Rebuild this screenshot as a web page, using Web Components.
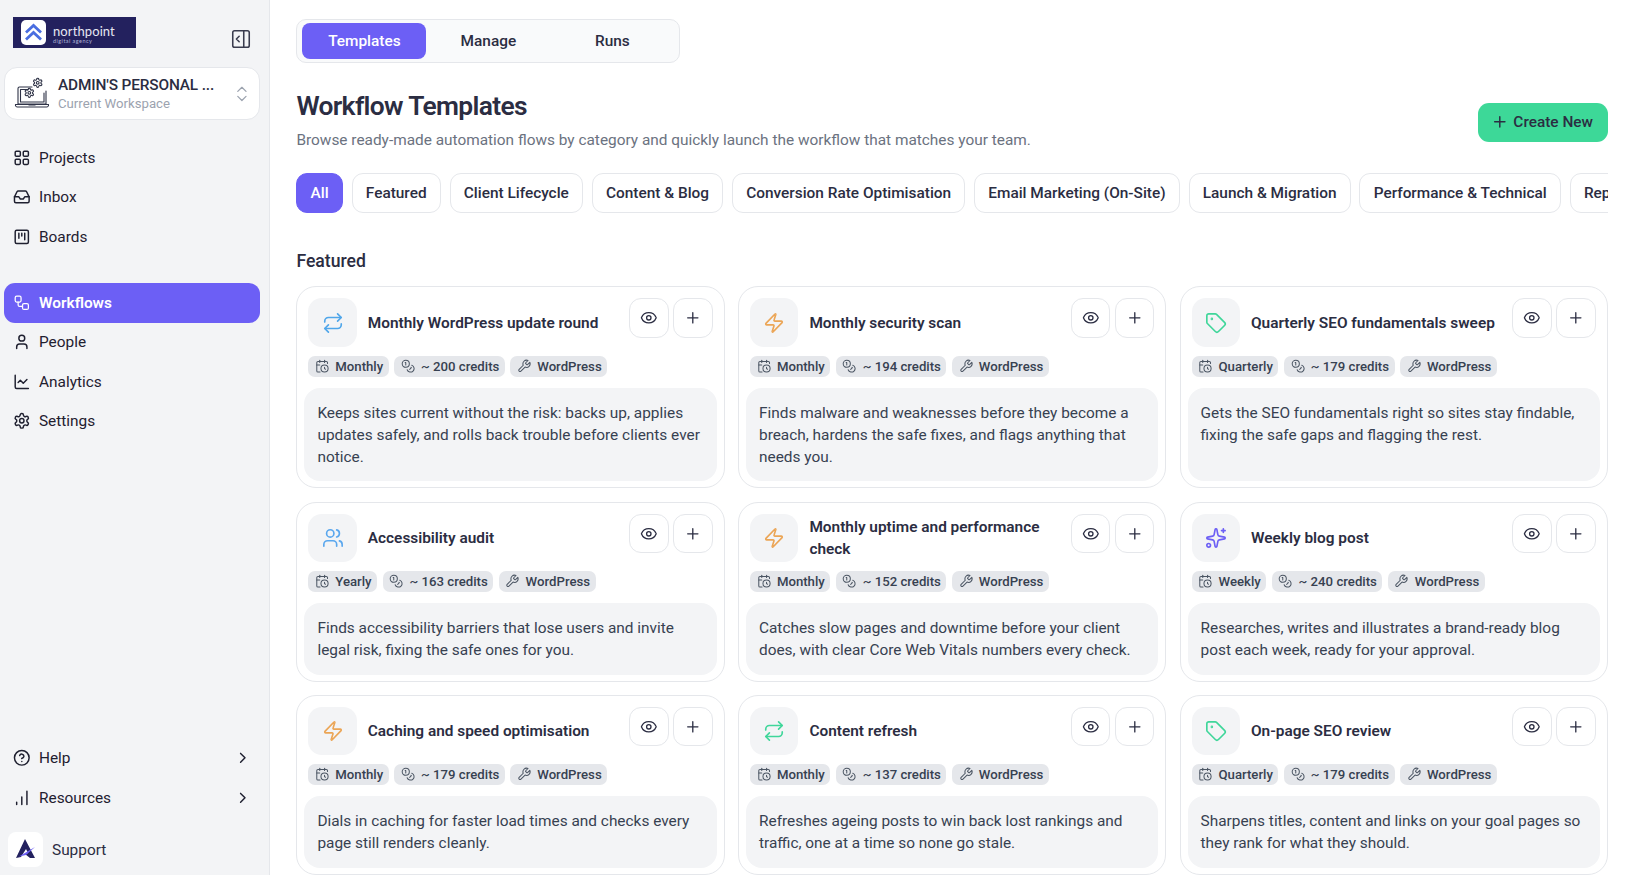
<!DOCTYPE html>
<html lang="en">
<head>
<meta charset="utf-8">
<title>Workflow Templates</title>
<style>
  html, body { margin: 0; height: 100%; overflow: hidden; background: #fff; }
  body { font-family: Roboto, "Liberation Sans", sans-serif; color: #2b2d42; }
</style>
</head>
<body>
<app-shell>
  <side-bar slot="side">
    <brand-logo slot="top"></brand-logo>
    <workspace-card slot="top" name="ADMIN'S PERSONAL ..." sub="Current Workspace"></workspace-card>
    <nav-item icon="grid">Projects</nav-item>
    <nav-item icon="inbox">Inbox</nav-item>
    <nav-item icon="kanban" style="margin-bottom:26.5px">Boards</nav-item>
    <nav-item icon="workflow" active>Workflows</nav-item>
    <nav-item icon="user">People</nav-item>
    <nav-item icon="chart">Analytics</nav-item>
    <nav-item icon="gear">Settings</nav-item>
    <nav-item slot="bottom" icon="help" more style="margin-bottom:1px">Help</nav-item>
    <nav-item slot="bottom" icon="bars" more>Resources</nav-item>
    <support-link slot="bottom">Support</support-link>
  </side-bar>

  <tab-bar>
    <tab-button active>Templates</tab-button>
    <tab-button>Manage</tab-button>
    <tab-button>Runs</tab-button>
  </tab-bar>

  <page-header heading="Workflow Templates" sub="Browse ready-made automation flows by category and quickly launch the workflow that matches your team.">
    <create-button>Create New</create-button>
  </page-header>

  <chip-row>
    <filter-chip active>All</filter-chip>
    <filter-chip>Featured</filter-chip>
    <filter-chip>Client Lifecycle</filter-chip>
    <filter-chip>Content &amp; Blog</filter-chip>
    <filter-chip>Conversion Rate Optimisation</filter-chip>
    <filter-chip>Email Marketing (On-Site)</filter-chip>
    <filter-chip>Launch &amp; Migration</filter-chip>
    <filter-chip>Performance &amp; Technical</filter-chip>
    <filter-chip>Reporting</filter-chip>
  </chip-row>

  <template-section heading="Featured">
    <template-card icon="repeat" tone="#4fa6ea" heading="Monthly WordPress update round" freq="Monthly" credits="200">Keeps sites current without the risk: backs up, applies updates safely, and rolls back trouble before clients ever notice.</template-card>
    <template-card icon="zap" tone="#eba556" heading="Monthly security scan" freq="Monthly" credits="194">Finds malware and weaknesses before they become a breach, hardens the safe fixes, and flags anything that needs you.</template-card>
    <template-card icon="tag" tone="#3fd69a" heading="Quarterly SEO fundamentals sweep" freq="Quarterly" credits="179">Gets the SEO fundamentals right so sites stay findable, fixing the safe gaps and flagging the rest.</template-card>
    <template-card icon="users" tone="#5aa7ee" heading="Accessibility audit" freq="Yearly" credits="163">Finds accessibility barriers that lose users and invite legal risk, fixing the safe ones for you.</template-card>
    <template-card icon="zap" tone="#eba556" heading="Monthly uptime and performance check" freq="Monthly" credits="152">Catches slow pages and downtime before your client does, with clear Core Web Vitals numbers every check.</template-card>
    <template-card icon="sparkle" tone="#6c5ff5" heading="Weekly blog post" freq="Weekly" credits="240">Researches, writes and illustrates a brand-ready blog post each week, ready for your approval.</template-card>
    <template-card icon="zap" tone="#eba556" heading="Caching and speed optimisation" freq="Monthly" credits="179">Dials in caching for faster load times and checks every page still renders cleanly.</template-card>
    <template-card icon="repeat" tone="#3fd69a" heading="Content refresh" freq="Monthly" credits="137">Refreshes ageing posts to win back lost rankings and traffic, one at a time so none go stale.</template-card>
    <template-card icon="tag" tone="#3fd69a" heading="On-page SEO review" freq="Quarterly" credits="179">Sharpens titles, content and links on your goal pages so they rank for what they should.</template-card>
  </template-section>
</app-shell>

<script>
(() => {
  // stroke icons, 24x24 box
  const ICONS = {
    grid: '<rect x="3" y="3" width="7" height="7" rx="1.5"/><rect x="14" y="3" width="7" height="7" rx="1.5"/><rect x="3" y="14" width="7" height="7" rx="1.5"/><rect x="14" y="14" width="7" height="7" rx="1.5"/>',
    inbox: '<path d="M22 12h-6l-2 3h-4l-2-3H2"/><path d="M5.45 5.11 2 12v6a2 2 0 0 0 2 2h16a2 2 0 0 0 2-2v-6l-3.45-6.89A2 2 0 0 0 16.76 4H7.24a2 2 0 0 0-1.79 1.11z"/>',
    kanban: '<rect x="3" y="3" width="18" height="18" rx="2"/><path d="M8 7v7M12 7v4M16 7v9"/>',
    workflow: '<rect x="3" y="3" width="8" height="8" rx="2"/><path d="M7 11v4a2 2 0 0 0 2 2h4"/><rect x="13" y="13" width="8" height="8" rx="2"/>',
    user: '<path d="M8 7a4 4 0 1 0 8 0a4 4 0 0 0-8 0"/><path d="M5 21v-2a4 4 0 0 1 4-4h6a4 4 0 0 1 4 4v2"/>',
    chart: '<path d="M3 3v16a2 2 0 0 0 2 2h16"/><path d="m19 9-5 5-4-4-3 3"/>',
    gear: '<path d="M12.22 2h-.44a2 2 0 0 0-2 2v.18a2 2 0 0 1-1 1.73l-.43.25a2 2 0 0 1-2 0l-.15-.08a2 2 0 0 0-2.73.73l-.22.38a2 2 0 0 0 .73 2.73l.15.1a2 2 0 0 1 1 1.72v.51a2 2 0 0 1-1 1.74l-.15.09a2 2 0 0 0-.73 2.73l.22.38a2 2 0 0 0 2.73.73l.15-.08a2 2 0 0 1 2 0l.43.25a2 2 0 0 1 1 1.73V20a2 2 0 0 0 2 2h.44a2 2 0 0 0 2-2v-.18a2 2 0 0 1 1-1.73l.43-.25a2 2 0 0 1 2 0l.15.08a2 2 0 0 0 2.73-.73l.22-.39a2 2 0 0 0-.73-2.73l-.15-.08a2 2 0 0 1-1-1.74v-.5a2 2 0 0 1 1-1.74l.15-.09a2 2 0 0 0 .73-2.73l-.22-.38a2 2 0 0 0-2.73-.73l-.15.08a2 2 0 0 1-2 0l-.43-.25a2 2 0 0 1-1-1.73V4a2 2 0 0 0-2-2z"/><circle cx="12" cy="12" r="3"/>',
    help: '<circle cx="12" cy="12" r="10"/><path d="M9.09 9a3 3 0 0 1 5.83 1c0 2-3 3-3 3"/><path d="M12 17h.01"/>',
    bars: '<path d="M5 21v-3M12 21V11M19 21V3"/>',
    chevron: '<path d="m9 18 6-6-6-6"/>',
    updown: '<path d="m7 15 5 5 5-5"/><path d="m7 9 5-5 5 5"/>',
    panel: '<rect x="3" y="3" width="18" height="18" rx="2"/><path d="M15 3v18"/><path d="m10 15-3-3 3-3"/>',
    repeat: '<path d="m17 2 4 4-4 4"/><path d="M3 11v-1a4 4 0 0 1 4-4h14"/><path d="m7 22-4-4 4-4"/><path d="M21 13v1a4 4 0 0 1-4 4H3"/>',
    zap: '<path d="M4 14a1 1 0 0 1-.78-1.63l9.9-10.2a.5.5 0 0 1 .86.46l-1.92 6.02A1 1 0 0 0 13 10h7a1 1 0 0 1 .78 1.63l-9.9 10.2a.5.5 0 0 1-.86-.46l1.92-6.02A1 1 0 0 0 11 14z"/>',
    tag: '<path d="M12.586 2.586A2 2 0 0 0 11.172 2H4a2 2 0 0 0-2 2v7.172a2 2 0 0 0 .586 1.414l8.704 8.704a2.426 2.426 0 0 0 3.42 0l6.58-6.58a2.426 2.426 0 0 0 0-3.42z"/><circle cx="7.5" cy="7.5" r=".5"/>',
    users: '<path d="M16 21v-2a4 4 0 0 0-4-4H6a4 4 0 0 0-4 4v2"/><circle cx="9" cy="7" r="4"/><path d="M22 21v-2a4 4 0 0 0-3-3.87"/><path d="M16 3.13a4 4 0 0 1 0 7.75"/>',
    sparkle: '<path d="M11.017 2.814a1 1 0 0 1 1.966 0l1.051 5.558a2 2 0 0 0 1.594 1.594l5.558 1.051a1 1 0 0 1 0 1.966l-5.558 1.051a2 2 0 0 0-1.594 1.594l-1.051 5.558a1 1 0 0 1-1.966 0l-1.051-5.558a2 2 0 0 0-1.594-1.594l-5.558-1.051a1 1 0 0 1 0-1.966l5.558-1.051a2 2 0 0 0 1.594-1.594z"/><path d="M20 2v4M22 4h-4"/><circle cx="4" cy="20" r="2"/>',
    calendar: '<path d="M16 14v2.2l1.6 1"/><path d="M16 2v4"/><path d="M21 7.5V6a2 2 0 0 0-2-2H5a2 2 0 0 0-2 2v14a2 2 0 0 0 2 2h3.5"/><path d="M3 10h5"/><path d="M8 2v4"/><circle cx="16" cy="16" r="6"/>',
    coins: '<circle cx="8" cy="8" r="6"/><path d="M18.09 10.37A6 6 0 1 1 10.34 18"/><path d="M7 6h1v4"/><path d="m16.71 13.88.7.71-2.82 2.82"/>',
    wrench: '<path d="M14.7 6.3a1 1 0 0 0 0 1.4l1.6 1.6a1 1 0 0 0 1.4 0l3.77-3.77a6 6 0 0 1-7.94 7.94l-6.91 6.91a2.12 2.12 0 0 1-3-3l6.91-6.91a6 6 0 0 1 7.94-7.94l-3.76 3.76z"/>',
    eye: '<path d="M2.062 12.348a1 1 0 0 1 0-.696 10.75 10.75 0 0 1 19.876 0 1 1 0 0 1 0 .696 10.75 10.75 0 0 1-19.876 0"/><circle cx="12" cy="12" r="3"/>',
    plus: '<path d="M5 12h14M12 5v14"/>'
  };

  // Small helper so every element gets an open shadow root with its own styles
  class Base extends HTMLElement {
    constructor() {
      super();
      this.attachShadow({ mode: 'open' });
    }
    render(css, html) {
      const template = document.createElement('template');
      template.innerHTML = `<style>${css}</style>${html}`;
      this.shadowRoot.replaceChildren(template.content.cloneNode(true));
    }
    attr(name, fallback = '') {
      return this.getAttribute(name) ?? fallback;
    }
  }

  class UiIcon extends Base {
    connectedCallback() {
      const size = this.attr('size', '16');
      const stroke = this.attr('stroke', '2');
      this.render(
        `:host { display: inline-flex; flex: none; width: ${size}px; height: ${size}px; }
         svg { display: block; width: 100%; height: 100%; }`,
        `<svg viewBox="0 0 24 24" fill="none" stroke="currentColor" stroke-width="${stroke}" stroke-linecap="round" stroke-linejoin="round">${ICONS[this.attr('name')] || ''}</svg>`
      );
    }
  }

  class AppShell extends Base {
    connectedCallback() {
      this.render(
        `:host { display: grid; grid-template-columns: 270px 1fr; height: 875px; overflow: hidden; }
         main { min-width: 0; padding: 19px 17px 0 26.4px; overflow: hidden; }`,
        `<slot name="side"></slot><main><slot></slot></main>`
      );
    }
  }

  class SideBar extends Base {
    connectedCallback() {
      this.render(
        `:host { display: flex; flex-direction: column; height: 875px; box-sizing: border-box; background: #f3f4f6; border-right: 1px solid #e5e7eb; padding: 17px 9px 8px 4px; }
         .top { display: flex; flex-direction: column; }
         nav { display: flex; flex-direction: column; margin-top: 18px; }
         .bottom { margin-top: auto; display: flex; flex-direction: column; }`,
        `<div class="top"><slot name="top"></slot></div>
         <nav><slot></slot></nav>
         <div class="bottom"><slot name="bottom"></slot></div>`
      );
    }
  }

  class BrandLogo extends Base {
    connectedCallback() {
      this.render(
        `:host { display: flex; align-items: center; justify-content: space-between; padding: 0 8px 0 9px; height: 31px; margin-bottom: 19px; }
         .logo { display: flex; align-items: center; gap: 7px; width: 123px; height: 31px; box-sizing: border-box; padding-left: 8px; background: #23215e; color: #e6e7f2; }
         .mark { width: 25px; height: 25px; background: #fff; border-radius: 5px; display: block; }
         .words { display: flex; flex-direction: column; font-family: Lato, sans-serif; padding-top: 4px; }
         b { font-weight: 400; font-size: 13px; line-height: 14px; letter-spacing: .1px; }
         small { font-size: 5.5px; line-height: 7px; letter-spacing: .45px; color: #aeb2d6; }
         ui-icon { color: #3a3c4e; margin-top: 12px; }`,
        `<div class="logo">
           <svg class="mark" viewBox="0 0 25 25" fill="none" stroke="#4a6ee0" stroke-width="2.8" stroke-linejoin="miter"><path d="M5 12.5 12.5 5.5 20 12.5"/><path d="M5 19.5 12.5 12.5 20 19.5"/></svg>
           <div class="words"><b>northpoint</b><small>digital agency</small></div>
         </div>
         <ui-icon name="panel" size="22" stroke="1.7"></ui-icon>`
      );
    }
  }

  class WorkspaceCard extends Base {
    connectedCallback() {
      this.render(
        `:host { display: flex; align-items: center; height: 53px; box-sizing: border-box; padding: 0 7px 0 10px; background: #fff; border: 1px solid #e5e7eb; border-radius: 13px; }
         svg { flex: none; width: 34px; height: 34px; overflow: visible; color: #2f3347; }
         .text { flex: 1; min-width: 0; margin-left: 9px; padding-top: 1px; }
         .name { font-size: 15.4px; line-height: 19px; font-weight: 500; letter-spacing: -.15px; color: #2b2d42; white-space: nowrap; }
         .sub { font-size: 13.2px; line-height: 18px; color: #9ca3af; }
         ui-icon { color: #9ca3af; }`,
        `<svg viewBox="0 0 34 34" fill="none" stroke="currentColor" stroke-width="1.1" stroke-linecap="round" stroke-linejoin="round">
           <path d="M17 10H4.5A1.5 1.5 0 0 0 3 11.5V27h28V14"/><path d="M5.5 25V12.5H16M29 16v9H5.5"/>
           <path d="M.5 27.5h33a2 2 0 0 1-2 2.5h-29a2 2 0 0 1-2-2.5z"/><path d="M14 28h6"/>
           <g transform="translate(8.8 10.3) scale(.46)" fill="#fff" stroke-width="2.4">${ICONS.gear}</g>
           <g transform="translate(17.2 .3) scale(.46)" fill="#fff" stroke-width="2.4">${ICONS.gear}</g>
         </svg>
         <div class="text"><div class="name">${this.attr('name')}</div><div class="sub">${this.attr('sub')}</div></div>
         <ui-icon name="updown" size="19.8" stroke="1.5"></ui-icon>`
      );
    }
  }

  class NavItem extends Base {
    connectedCallback() {
      const active = this.hasAttribute('active');
      this.render(
        `:host { display: flex; align-items: center; gap: 8.4px; height: 39.5px; padding: 0 8px 0 9px; border-radius: 11px; font-size: 15.4px; color: #1f2030; ${active ? 'background: #6c5ff5; color: #fff; font-weight: 600;' : ''} }
         .label { flex: 1; }`,
        `<ui-icon name="${this.attr('icon')}" size="17.6" stroke="${active ? 1.7 : 2}"></ui-icon>
         <span class="label"><slot></slot></span>
         ${this.hasAttribute('more') ? '<ui-icon name="chevron" size="17.6"></ui-icon>' : ''}`
      );
    }
  }

  class SupportLink extends Base {
    connectedCallback() {
      this.render(
        `:host { display: flex; align-items: center; gap: 9px; height: 35px; margin: 14px 0 0 4px; font-size: 15.4px; color: #2b2d42; }
         svg { width: 35px; height: 35px; background: #fff; border-radius: 8px; }`,
        `<svg viewBox="0 0 35 35"><path d="M17 7 8 26l5-1 5-8 2 4-3 1 5 4h5z" fill="#23215e"/><path d="M11 24.5 27 15l-9 8z" fill="#6c5ff5"/></svg>
         <span><slot></slot></span>`
      );
    }
  }

  class TabBar extends Base {
    connectedCallback() {
      this.render(
        `:host { display: inline-flex; box-sizing: border-box; height: 44px; padding: 3px 5px; background: #f9fafb; border: 1px solid #e5e7eb; border-radius: 10px; }`,
        `<slot></slot>`
      );
    }
  }

  class TabButton extends Base {
    connectedCallback() {
      const active = this.hasAttribute('active');
      this.render(
        `:host { display: flex; align-items: center; justify-content: center; width: 124px; height: 36px; border-radius: 8px; font-size: 15.4px; font-weight: 500; color: #2b2d42; ${active ? 'background: #6c5ff5; color: #fff;' : ''} }`,
        `<slot></slot>`
      );
    }
  }

  class PageHeader extends Base {
    connectedCallback() {
      this.render(
        `:host { display: flex; align-items: center; justify-content: space-between; margin-top: 27px; }
         h1 { margin: 0; font-size: 26.4px; line-height: 32px; font-weight: 600; color: #2b2d42; letter-spacing: -.66px; }
         p { margin: 8px 0 0; font-size: 15.4px; line-height: 20px; color: #6b7280; }
         ::slotted(create-button) { margin-top: 4px; }`,
        `<div><h1>${this.attr('heading')}</h1><p>${this.attr('sub')}</p></div>
         <slot></slot>`
      );
    }
  }

  class CreateButton extends Base {
    connectedCallback() {
      this.render(
        `:host { display: flex; align-items: center; gap: 5px; height: 39px; box-sizing: border-box; padding: 0 15px 0 13px; background: #3dd898; border-radius: 11px; font-size: 15.4px; font-weight: 500; color: #2b2d42; }`,
        `<ui-icon name="plus" size="17.6"></ui-icon><slot></slot>`
      );
    }
  }

  class ChipRow extends Base {
    connectedCallback() {
      this.render(
        `:host { display: flex; gap: 8.8px; margin-top: 23px; overflow: hidden; }`,
        `<slot></slot>`
      );
    }
  }

  class FilterChip extends Base {
    connectedCallback() {
      const active = this.hasAttribute('active');
      this.render(
        `:host { flex: none; display: flex; align-items: center; height: 40px; box-sizing: border-box; padding: 0 13.2px; background: #fff; border: 1px solid #e5e7eb; border-radius: 11px; font-size: 15.4px; font-weight: 500; white-space: nowrap; color: #2b2d42; ${active ? 'background: #6c5ff5; border-color: #6c5ff5; color: #fff;' : ''} }`,
        `<slot></slot>`
      );
    }
  }

  class TemplateSection extends Base {
    connectedCallback() {
      this.render(
        `:host { display: block; margin-top: 37.4px; }
         h2 { margin: 0 0 14px; font-size: 17.6px; line-height: 22px; font-weight: 500; color: #2b2d42; }
         .grid { display: grid; grid-template-columns: repeat(3, minmax(0, 1fr)); gap: 13.2px; }`,
        `<h2>${this.attr('heading')}</h2><div class="grid"><slot></slot></div>`
      );
    }
  }

  class TemplateCard extends Base {
    connectedCallback() {
      this.render(
        `:host { display: flex; flex-direction: column; box-sizing: border-box; padding: 6px; background: #fff; border: 1px solid #e5e7eb; border-radius: 20px; }
         .head { display: flex; align-items: flex-start; gap: 11px; padding: 5px 5px 0 5px; }
         .tile { flex: none; display: flex; align-items: center; justify-content: center; width: 48.4px; height: 48.4px; border-radius: 14px; background: #f3f4f6; color: ${this.attr('tone')}; }
         h3 { flex: 1; align-self: center; min-width: 0; margin: 0; font-size: 15.4px; line-height: 22px; font-weight: 600; color: #2b2d42; }
         .actions { flex: none; display: flex; gap: 4.4px; }
         .action { display: flex; align-items: center; justify-content: center; width: 39.6px; height: 39.6px; box-sizing: border-box; background: #fff; border: 1px solid #e5e7eb; border-radius: 12px; color: #2b2d42; }
         .badges { display: flex; gap: 5.5px; padding: 9px 5px 0; }
         .badge { display: flex; align-items: center; gap: 6px; height: 21px; padding: 0 5.5px 0 6.6px; background: #e5e7eb; border-radius: 7px; font-size: 13.2px; font-weight: 500; color: #374151; white-space: nowrap; }
         .badge ui-icon { color: #4b5563; }
         .desc { flex: 1; margin: 11px 1px 0; padding: 14px 13px 13.6px; background: #f3f4f6; border-radius: 16px; font-size: 15.4px; line-height: 22px; color: #374151; }`,
        `<div class="head">
           <div class="tile"><ui-icon name="${this.attr('icon')}" size="22" stroke="1.8"></ui-icon></div>
           <h3>${this.attr('heading')}</h3>
           <div class="actions">
             <div class="action"><ui-icon name="eye" size="17.6" stroke="1.8"></ui-icon></div>
             <div class="action"><ui-icon name="plus" size="17.6" stroke="1.8"></ui-icon></div>
           </div>
         </div>
         <div class="badges">
           <span class="badge"><ui-icon name="calendar" size="14.3" stroke="1.7"></ui-icon>${this.attr('freq')}</span>
           <span class="badge"><ui-icon name="coins" size="14.3" stroke="1.7"></ui-icon>~ ${this.attr('credits')} credits</span>
           <span class="badge"><ui-icon name="wrench" size="14.3" stroke="1.7"></ui-icon>WordPress</span>
         </div>
         <div class="desc"><slot></slot></div>`
      );
    }
  }

  customElements.define('ui-icon', UiIcon);
  customElements.define('app-shell', AppShell);
  customElements.define('side-bar', SideBar);
  customElements.define('brand-logo', BrandLogo);
  customElements.define('workspace-card', WorkspaceCard);
  customElements.define('nav-item', NavItem);
  customElements.define('support-link', SupportLink);
  customElements.define('tab-bar', TabBar);
  customElements.define('tab-button', TabButton);
  customElements.define('page-header', PageHeader);
  customElements.define('create-button', CreateButton);
  customElements.define('chip-row', ChipRow);
  customElements.define('filter-chip', FilterChip);
  customElements.define('template-section', TemplateSection);
  customElements.define('template-card', TemplateCard);
})();
</script>
</body>
</html>
